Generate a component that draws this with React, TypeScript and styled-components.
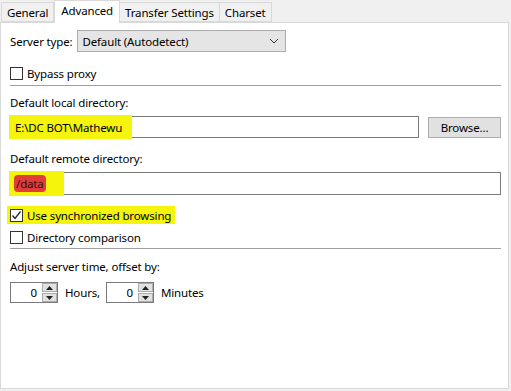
import { createGlobalStyle, styled } from 'styled-components';

const GlobalStyle = createGlobalStyle`
    html, body {
        margin: 0;
        padding: 0;
        background: #f0f0f0;
    }
    body {
        font-family: "Noto Sans", "Open Sans", sans-serif;
        font-size: 11.5px;
        letter-spacing: -0.15px;
        color: #000;
    }
`;

const Dialog = styled.div`
    width: 511px;
    height: 391px;
    background: #f0f0f0;
`;

const TabStrip = styled.div`
    display: flex;
    align-items: flex-end;
    height: 22px;
    padding-left: 1px;
`;

const Tab = styled.div<{ $active?: boolean; }>`
    box-sizing: border-box;
    height: ${props => props.$active ? '23px' : '20px'};
    padding: ${props => props.$active ? '0 6px 3px' : '0 5px'};
    margin-bottom: ${props => props.$active ? '-1px' : '0'};
    display: flex;
    align-items: center;
    background: ${props => props.$active ? '#ffffff' : '#f0f0f0'};
    border: 1px solid #d9d9d9;
    border-bottom: ${props => props.$active ? 'none' : '1px solid #d9d9d9'};
    border-left: ${props => props.$active ? '1px solid #d9d9d9' : 'none'};
    position: relative;
    z-index: ${props => props.$active ? 1 : 0};
    white-space: nowrap;

    &:first-child {
        border-left: 1px solid #d9d9d9;
    }
`;

const Panel = styled.div`
    box-sizing: border-box;
    width: 509px;
    height: 367px;
    background: #ffffff;
    border: 1px solid #d9d9d9;
    padding: 7px 7px 0 9px;
    display: flex;
    flex-direction: column;
`;

const ServerRow = styled.div`
    display: flex;
    align-items: center;
    gap: 5px;
    height: 22px;
`;

const Select = styled.div`
    box-sizing: border-box;
    width: 209px;
    height: 22px;
    background: #e5e5e5;
    border: 1px solid #adadad;
    display: flex;
    align-items: center;
    justify-content: space-between;
    padding: 0 6px 0 4px;
`;

const CheckRow = styled.label<{ $gap?: number; }>`
    display: flex;
    align-items: center;
    gap: 4px;
    height: 18px;
    margin-top: ${props => props.$gap ?? 0}px;
`;

const CheckBox = styled.span`
    box-sizing: border-box;
    width: 13px;
    height: 13px;
    border: 1px solid #333333;
    background: #ffffff;
    display: flex;
    align-items: center;
    justify-content: center;
`;

const Separator = styled.div<{ $gap: number; }>`
    height: 1px;
    background: #a0a0a0;
    margin-top: ${props => props.$gap}px;
`;

const FieldLabel = styled.div<{ $gap: number; }>`
    line-height: 16px;
    margin-top: ${props => props.$gap}px;
`;

const InputRow = styled.div`
    display: flex;
    align-items: center;
    gap: 9px;
    margin-top: 5px;
`;

const TextBox = styled.div<{ $height: number; }>`
    flex: 1;
    box-sizing: border-box;
    height: ${props => props.$height}px;
    border: 1px solid #7a7a7a;
    background: #ffffff;
    display: flex;
    align-items: center;
`;

const Marker = styled.span<{ $width: number; }>`
    display: flex;
    align-items: center;
    box-sizing: border-box;
    width: ${props => props.$width}px;
    align-self: stretch;
    margin: -2px 0 -2px -2px;
    padding-left: 6px;
    background: #f4f40c;
`;

const RedMark = styled.span`
    background: #e23c3a;
    color: #3a0a0a;
    border-radius: 4px;
    padding: 1px 2px;
    margin-left: -1px;
`;

const Button = styled.div`
    box-sizing: border-box;
    width: 73px;
    height: 21px;
    background: #e1e1e1;
    border: 1px solid #adadad;
    display: flex;
    align-items: center;
    justify-content: center;
`;

const CheckMarker = styled.span`
    display: flex;
    align-items: center;
    gap: 4px;
    background: #f4f40c;
    margin-left: -3px;
    padding: 0 4px 0 3px;
    height: 18px;
`;

const SpinRow = styled.div`
    display: flex;
    align-items: center;
    margin-top: 7px;
    height: 21px;
`;

const Spinner = styled.div`
    box-sizing: border-box;
    width: 48px;
    height: 21px;
    border: 1px solid #7a7a7a;
    display: flex;
    align-items: stretch;
    background: #fff;
`;

const SpinValue = styled.div`
    flex: 1;
    display: flex;
    align-items: center;
    justify-content: flex-end;
    padding-right: 5px;
`;

const SpinButtons = styled.div`
    width: 15px;
    display: flex;
    flex-direction: column;
    gap: 1px;
`;

const SpinButton = styled.div`
    flex: 1;
    background: #e1e1e1;
    border: 1px solid #adadad;
    display: flex;
    align-items: center;
    justify-content: center;
`;

const SpinLabel = styled.span<{ $width: number; }>`
    box-sizing: border-box;
    width: ${props => props.$width}px;
    padding-left: 7px;
`;

const Check = () => (
    <svg width="11" height="11" viewBox="0 0 11 11">
        <polyline points="1.5,5.5 4,8.5 9.5,1.5" fill="none" stroke="#222" strokeWidth="1.3" />
    </svg>
);

const Triangle = ({ up }: { up?: boolean }) => (
    <svg width="7" height="4" viewBox="0 0 7 4">
        <polygon points={up ? '0,4 7,4 3.5,0' : '0,0 7,0 3.5,4'} fill="#222" />
    </svg>
);

const SpinBox = ({ value }: { value: string }) => (
    <Spinner>
        <SpinValue>{value}</SpinValue>
        <SpinButtons>
            <SpinButton><Triangle up /></SpinButton>
            <SpinButton><Triangle /></SpinButton>
        </SpinButtons>
    </Spinner>
);

export default function App() {
    return (
        <Dialog>
            <GlobalStyle />
            <TabStrip>
                <Tab>General</Tab>
                <Tab $active>Advanced</Tab>
                <Tab>Transfer Settings</Tab>
                <Tab>Charset</Tab>
            </TabStrip>
            <Panel>
                <ServerRow>
                    <span>Server type:</span>
                    <Select>
                        <span>Default (Autodetect)</span>
                        <svg width="10" height="6" viewBox="0 0 10 6">
                            <polyline points="1,1 5,5 9,1" fill="none" stroke="#333" strokeWidth="1" />
                        </svg>
                    </Select>
                </ServerRow>
                <CheckRow $gap={12}>
                    <CheckBox />
                    <span>Bypass proxy</span>
                </CheckRow>
                <Separator $gap={3} />
                <FieldLabel $gap={9}>Default local directory:</FieldLabel>
                <InputRow>
                    <TextBox $height={22}>
                        <Marker $width={123}>E:\DC BOT\Mathewu</Marker>
                    </TextBox>
                    <Button>Browse...</Button>
                </InputRow>
                <FieldLabel $gap={13}>Default remote directory:</FieldLabel>
                <InputRow>
                    <TextBox $height={23}>
                        <Marker $width={55}><RedMark>/data</RedMark></Marker>
                    </TextBox>
                </InputRow>
                <CheckRow $gap={11}>
                    <CheckMarker>
                        <CheckBox><Check /></CheckBox>
                        <span>Use synchronized browsing</span>
                    </CheckMarker>
                </CheckRow>
                <CheckRow $gap={4}>
                    <CheckBox />
                    <span>Directory comparison</span>
                </CheckRow>
                <Separator $gap={2} />
                <FieldLabel $gap={10}>Adjust server time, offset by:</FieldLabel>
                <SpinRow>
                    <SpinBox value="0" />
                    <SpinLabel $width={48}>Hours,</SpinLabel>
                    <SpinBox value="0" />
                    <SpinLabel $width={60}>Minutes</SpinLabel>
                </SpinRow>
            </Panel>
        </Dialog>
    );
}
